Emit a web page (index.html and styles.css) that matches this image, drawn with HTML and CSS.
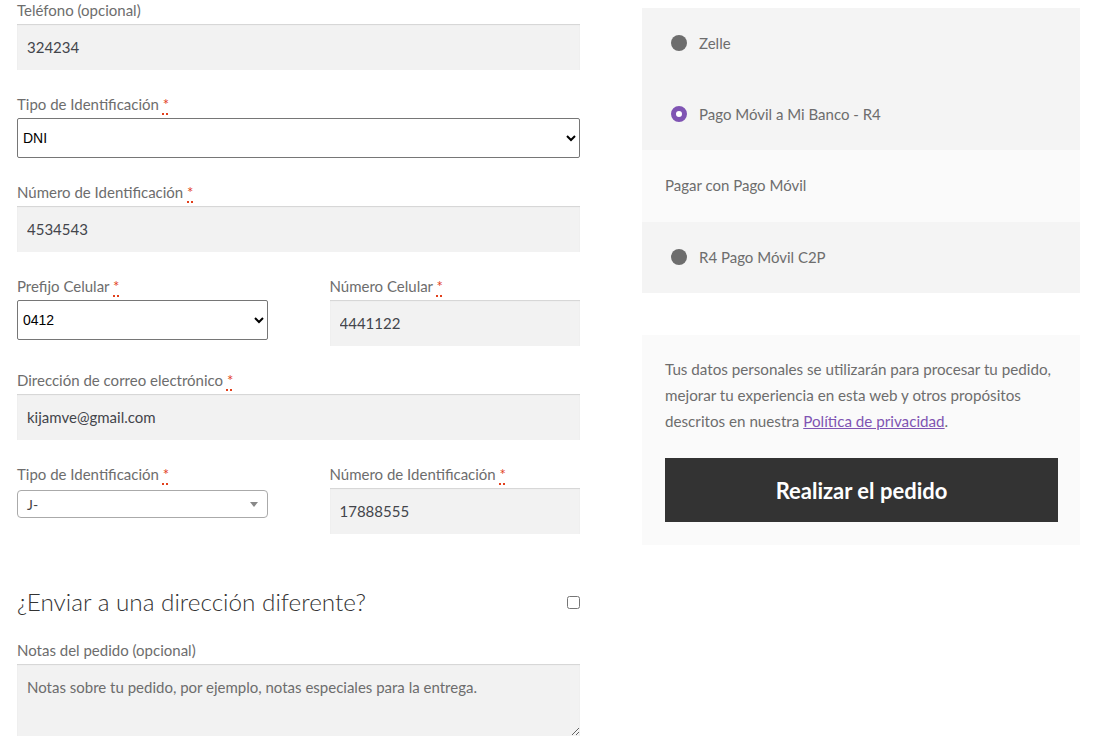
FILE: index.html
```html
<!DOCTYPE html>
<html lang="es">
<head>
<meta charset="utf-8">
<title>Finalizar compra</title>
<link rel="stylesheet" href="styles.css">
</head>
<body>
<div class="checkout">
  <div class="billing">
    <div class="field">
      <label class="lbl">Teléfono (opcional)</label>
      <input class="txt" type="text" value="324234">
    </div>
    <div class="field">
      <label class="lbl">Tipo de Identificación <abbr class="required" title="obligatorio">*</abbr></label>
      <select class="native"><option>DNI</option></select>
    </div>
    <div class="field">
      <label class="lbl">Número de Identificación <abbr class="required" title="obligatorio">*</abbr></label>
      <input class="txt" type="text" value="4534543">
    </div>
    <div class="row">
      <div class="field">
        <label class="lbl">Prefijo Celular <abbr class="required" title="obligatorio">*</abbr></label>
        <select class="native"><option>0412</option></select>
      </div>
      <div class="field">
        <label class="lbl">Número Celular <abbr class="required" title="obligatorio">*</abbr></label>
        <input class="txt" type="text" value="4441122">
      </div>
    </div>
    <div class="field">
      <label class="lbl">Dirección de correo electrónico <abbr class="required" title="obligatorio">*</abbr></label>
      <input class="txt" type="text" value="kijamve@gmail.com">
    </div>
    <div class="row">
      <div class="field">
        <label class="lbl">Tipo de Identificación <abbr class="required" title="obligatorio">*</abbr></label>
        <div class="select2"><span class="s2-text">J-</span><span class="s2-arrow"></span></div>
      </div>
      <div class="field">
        <label class="lbl">Número de Identificación <abbr class="required" title="obligatorio">*</abbr></label>
        <input class="txt" type="text" value="17888555">
      </div>
    </div>
    <div class="ship">
      <h3 class="ship-title">¿Enviar a una dirección diferente?</h3>
      <input class="ship-check" type="checkbox">
    </div>
    <div class="field notes">
      <label class="lbl">Notas del pedido (opcional)</label>
      <textarea class="txtarea" placeholder="Notas sobre tu pedido, por ejemplo, notas especiales para la entrega."></textarea>
    </div>
  </div>

  <div class="side">
    <ul class="methods">
      <li class="method"><span class="radio"></span>Zelle</li>
      <li class="method"><span class="radio checked"></span>Pago Móvil a Mi Banco - R4</li>
      <li class="method-desc">Pagar con Pago Móvil</li>
      <li class="method"><span class="radio"></span>R4 Pago Móvil C2P</li>
    </ul>
    <div class="place">
      <p class="privacy">Tus datos personales se utilizarán para procesar tu pedido, mejorar tu experiencia en esta web y otros propósitos descritos en nuestra <a href="#" class="link">Política de privacidad</a>.</p>
      <button class="order-btn" type="button">Realizar el pedido</button>
    </div>
  </div>
</div>
</body>
</html>
```

FILE: styles.css
```css
* { box-sizing: border-box; }
html, body { margin: 0; padding: 0; background: #fff; }
body {
  font-family: "Lato", "Liberation Sans", sans-serif;
  color: #6d6d6d;
  font-size: 15px;
}
.checkout {
  display: grid;
  grid-template-columns: 563px 438px;
  column-gap: 62px;
  padding: 0 36px 0 17px;
  align-items: start;
}
.billing { display: flex; flex-direction: column; }
.field { display: flex; flex-direction: column; margin-bottom: 24px; }
.row { display: grid; grid-template-columns: 1fr 1fr; column-gap: 62px; }
.lbl {
  display: block;
  line-height: 20px;
  height: 20px;
  margin-bottom: 4px;
  font-size: 15px;
  color: #6d6d6d;
  white-space: nowrap;
}
.required {
  color: #e2401c;
  text-decoration: underline dotted #e2401c;
  text-decoration-thickness: 2px;
  text-underline-offset: 3px;
  cursor: help;
}
.txt {
  height: 46px;
  width: 100%;
  border: 0;
  background: #f2f2f2;
  box-shadow: inset 0 1px 1px rgba(0,0,0,.125);
  padding: 0 10px;
  font-family: inherit;
  font-size: 15px;
  color: #43454b;
  outline: none;
}
.native {
  height: 40px;
  width: 100%;
  font-family: "Liberation Sans", Arial, sans-serif;
  font-size: 14px;
  color: #000;
  background: #fff;
  border: 1px solid #767676;
  border-radius: 2px;
  padding: 0 1px;
}
.select2 {
  margin-top: 2px;
  height: 28px;
  border: 1px solid #aaa;
  border-radius: 4px;
  background: #fff;
  display: flex;
  align-items: center;
  justify-content: space-between;
  padding: 0 9px 0 9px;
}
.s2-text { color: #444; font-size: 14px; }
.s2-arrow {
  width: 0; height: 0;
  border-style: solid;
  border-width: 5px 4px 0 4px;
  border-color: #888 transparent transparent transparent;
}
.ship {
  display: flex;
  align-items: center;
  justify-content: space-between;
  margin-top: 30px;
  margin-bottom: 24px;
}
.ship-title {
  margin: 0;
  font-size: 24.3px;
  line-height: 28px;
  font-weight: 300;
  color: #333;
}
.ship-check { margin: 0; width: 13px; height: 13px; }
.notes { margin-bottom: 0; }
.txtarea {
  height: 72px;
  width: 100%;
  border: 0;
  background: #f2f2f2;
  box-shadow: inset 0 1px 1px rgba(0,0,0,.125);
  padding: 12px 10px;
  font-family: inherit;
  font-size: 15px;
  line-height: 22px;
  color: #43454b;
  resize: vertical;
  outline: none;
}
.txtarea::placeholder { color: #6d6d6d; }

.side { padding-top: 8px; display: flex; flex-direction: column; }
.methods { list-style: none; margin: 0; padding: 0; background: #f4f4f4; }
.method {
  display: flex;
  align-items: center;
  height: 71px;
  padding-left: 29px;
  padding-bottom: 2px;
  font-size: 15px;
  color: #6d6d6d;
}
.method-desc {
  display: flex;
  align-items: center;
  height: 72px;
  padding-left: 23px;
  padding-bottom: 2px;
  background: #fafafa;
  font-size: 15px;
  color: #6d6d6d;
}
.radio {
  width: 16px; height: 16px;
  border-radius: 50%;
  background: #6d6d6d;
  margin-right: 12px;
  flex: none;
}
.radio.checked {
  background: #fff;
  border: 5px solid #7f54b3;
}
.place {
  margin-top: 42px;
  background: #fafafa;
  padding: 21px 22px 23px 23px;
}
.privacy {
  margin: 0 0 24px;
  font-size: 15.2px;
  line-height: 26px;
  color: #6d6d6d;
}
.link { color: #7f54b3; text-decoration: underline; }
.order-btn {
  display: block;
  width: 100%;
  height: 64px;
  border: 0;
  background: #333;
  color: #fff;
  font-family: inherit;
  font-size: 22px;
  font-weight: 700;
  cursor: pointer;
}
```
